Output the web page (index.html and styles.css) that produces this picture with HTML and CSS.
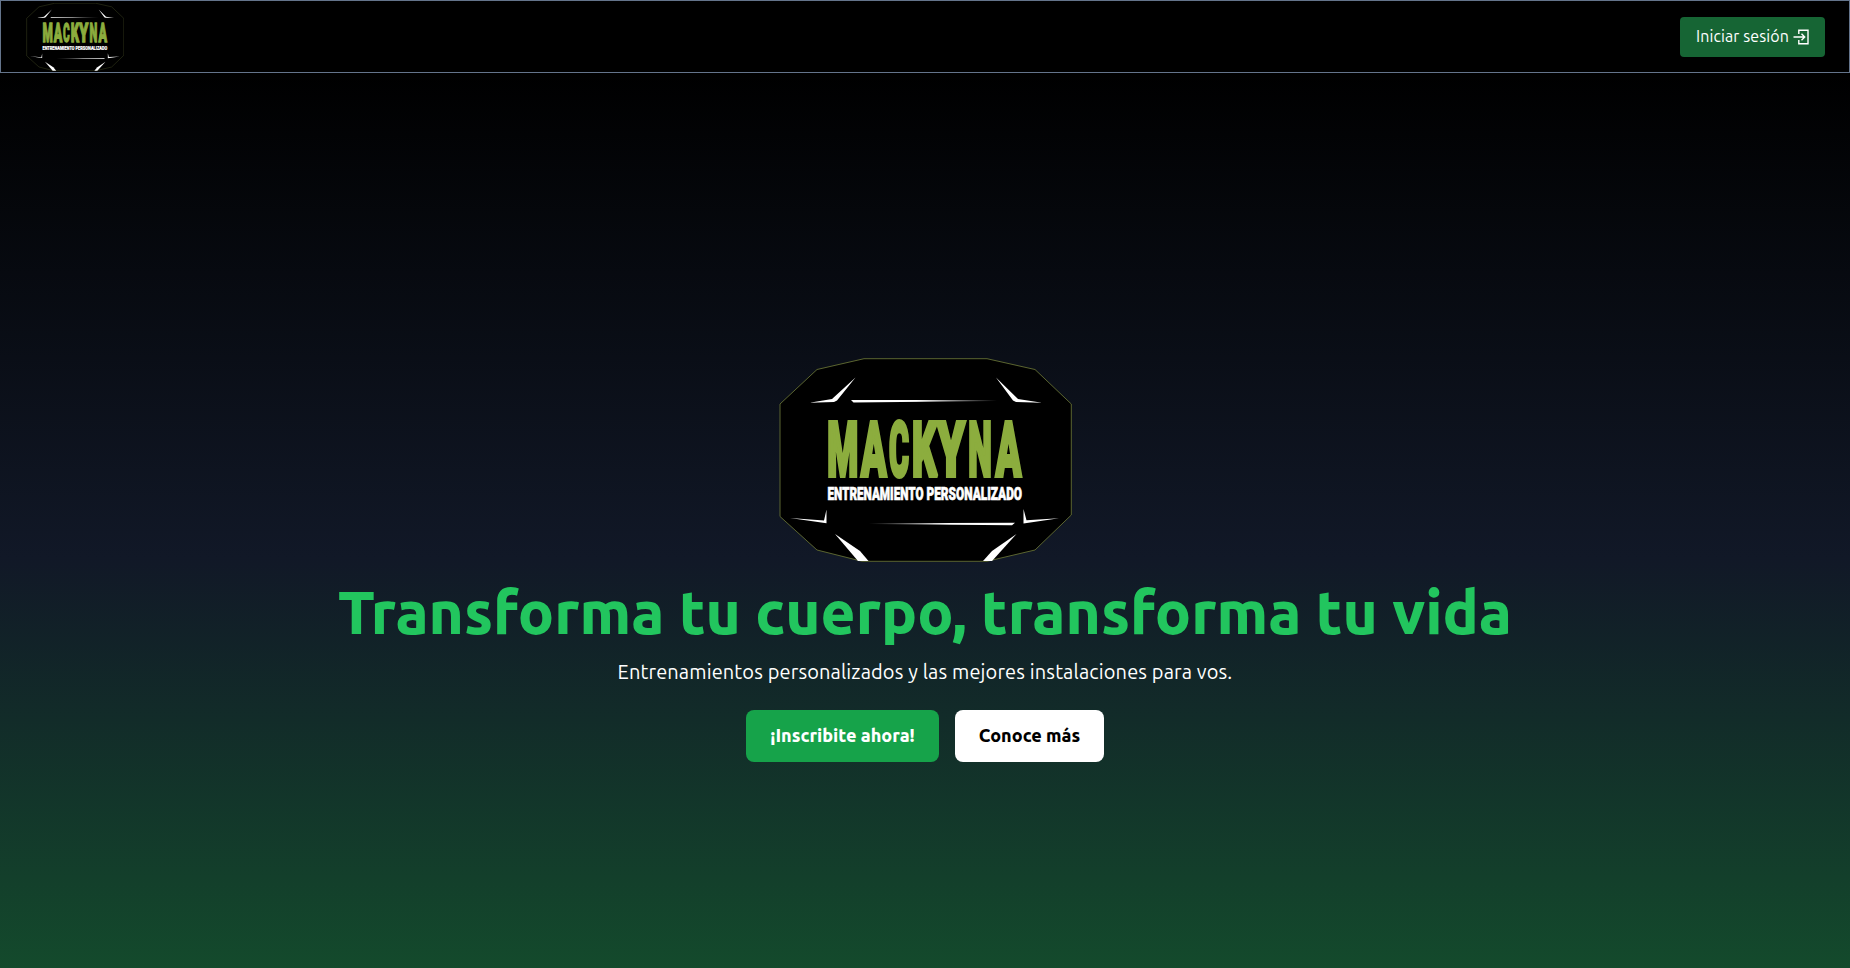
FILE: index.html
```html
<!DOCTYPE html>
<html lang="es">
<head>
<meta charset="utf-8">
<title>Mackyna</title>
<link rel="stylesheet" href="styles.css">
</head>
<body>
<svg class="defs" aria-hidden="true">
<defs>
<linearGradient id="fadeR"><stop offset=".45" stop-color="#fff"/><stop offset="1" stop-color="#fff" stop-opacity="0"/></linearGradient>
<linearGradient id="fadeL"><stop offset="0" stop-color="#fff" stop-opacity="0"/><stop offset=".55" stop-color="#fff"/></linearGradient>
<symbol id="logo" viewBox="0 0 294 204">
<path d="M86 .7H209L257 11.500 293.300 46V157L257 192 209 203.300H84L39 192 2 158.500V46L39 11.500Z" fill="#000" stroke="#5b6530" stroke-width="1"/>
<path d="M31.500 44.700L54 41 77.500 19.500 59 42.500 56 44Z" fill="#fff"/>
<path d="M264 44.700L240 41 218 19.500 235 42.500 238 44Z" fill="#fff"/>
<path d="M73 42H219V43L75.500 44.600Z" fill="url(#fadeR)"/>
<path d="M91 165.200L237 164.800 234 167.300 91 166Z" fill="url(#fadeL)"/>
<path d="M12 160L46 162.500 48.500 151.500V165.300Z" fill="#fff"/>
<path d="M281 160.300L248.500 162.300 245.500 151V165.500Z" fill="#fff"/>
<path d="M57 176L82 193 90.500 203H80Z" fill="#fff"/>
<path d="M238.500 176L214 193 205 203H214Z" fill="#fff"/>
<g class="logo-name" text-anchor="middle">
<text x="64.700" y="118.200" textLength="31" lengthAdjust="spacingAndGlyphs">M</text>
<text x="95.700" y="118.200" textLength="25.500" lengthAdjust="spacingAndGlyphs">A</text>
<text x="121" y="118.200" textLength="20" lengthAdjust="spacingAndGlyphs">C</text>
<text x="146.500" y="118.200" textLength="25" lengthAdjust="spacingAndGlyphs">K</text>
<text x="173" y="118.200" textLength="28" lengthAdjust="spacingAndGlyphs">Y</text>
<text x="202" y="118.200" textLength="23.500" lengthAdjust="spacingAndGlyphs">N</text>
<text x="230.500" y="118.200" textLength="25.500" lengthAdjust="spacingAndGlyphs">A</text>
</g>
<text class="logo-tag" x="49.500" y="141.800" textLength="96" lengthAdjust="spacingAndGlyphs">ENTRENAMIENTO</text>
<text class="logo-tag" x="148.500" y="141.800" textLength="95.500" lengthAdjust="spacingAndGlyphs">PERSONALIZADO</text>
</symbol>
</defs>
</svg>
<header class="nav">
<svg class="nav-logo"><use href="#logo"/></svg>
<a class="login"><span class="login-text">Iniciar sesión</span>
<svg class="login-icon" viewBox="0 0 16 16" fill="none" stroke="#fff" stroke-width="1.400"><path d="M5.800 5V1.200H15V14.800H5.800V11M.5 8H11.500M8.500 4.800L11.700 8 8.500 11.200"/></svg></a>
</header>
<main class="hero">
<svg class="hero-logo"><use href="#logo"/></svg>
<h1 class="title">Transforma tu cuerpo, transforma tu vida</h1>
<p class="subtitle">Entrenamientos personalizados y las mejores instalaciones para vos.</p>
<div class="actions"><a class="btn btn-join">¡Inscribite ahora!</a><a class="btn btn-more">Conoce más</a></div>
</main>
</body>
</html>
```
FILE: styles.css
```css
*{box-sizing:border-box}
body{margin:0;height:968px;overflow:hidden;background:#000;font-family:Ubuntu,"Noto Sans",sans-serif;color:#fff}
.defs{position:absolute;width:0;height:0}
.nav{height:73px;border:1px solid #64748b;background:#000;display:flex;justify-content:space-between;align-items:center;padding:0 24px 0 25px}
.nav-logo{width:98px;height:68px}
.login{width:145px;height:40px;padding:0 16px;border-radius:4px;background:#166534;display:flex;align-items:center;justify-content:space-between}
.login-text{font-size:16px;line-height:24px;padding-bottom:2px;white-space:nowrap;letter-spacing:.1px}
.login-icon{width:16px;height:16px}
.hero{height:895px;padding-top:285px;background:linear-gradient(#000,#111827 484px,#14532d 968px);display:flex;flex-direction:column;align-items:center}
.hero-logo{width:294px;height:204px}
.title{margin:20px 0 0;font-size:60px;line-height:60px;font-weight:800;color:#22c55e;white-space:nowrap}
.subtitle{margin:16px 0 0;font-size:20px;line-height:28px;letter-spacing:.13px;white-space:nowrap}
.actions{display:flex;gap:16px;margin-top:24px}
.btn{height:52px;padding-bottom:2px;border-radius:8px;display:flex;align-items:center;justify-content:center;font-size:18px;font-weight:800;white-space:nowrap}
.btn-join{width:193px;background:#16a34a}
.btn-more{width:149px;background:#fff;color:#000}
.logo-name{font-family:Roboto,sans-serif;font-weight:900;font-size:76px;fill:#8cad3e;stroke:#8cad3e;stroke-width:4px;stroke-linejoin:miter;stroke-miterlimit:2}
.logo-tag{font-family:Roboto,sans-serif;font-weight:900;font-size:18.500px;fill:#fff;stroke:#fff;stroke-width:.7px}
```
